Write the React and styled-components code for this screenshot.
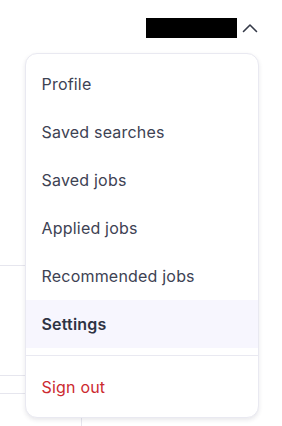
import React from "react";
import styled, { createGlobalStyle } from "styled-components";

const GlobalStyle = createGlobalStyle`
  body {
    margin: 0;
    background: #ffffff;
    font-family: Inter, "Noto Sans", sans-serif;
  }
`;

const menuItems = [
  { label: "Profile" },
  { label: "Saved searches" },
  { label: "Saved jobs" },
  { label: "Applied jobs" },
  { label: "Recommended jobs" },
  { label: "Settings", active: true },
];

const App = () => {
  return (
    <>
      <GlobalStyle />
      <Page>
        <Header>
          <AccountButton type="button">
            <Redacted />
            <Chevron viewBox="0 0 16 10" aria-hidden="true">
              <path d="M1.5 8.5L8 2l6.5 6.5" />
            </Chevron>
          </AccountButton>
        </Header>

        <Content>
          <Section $height={210} />
          <Section $height={110} />
          <Section $height={18} />
          <Columns>
            <Column />
            <Column />
          </Columns>
        </Content>

        <Menu>
          {menuItems.map((item) => (
            <MenuItem key={item.label} $active={item.active}>
              {item.label}
            </MenuItem>
          ))}
          <Divider />
          <MenuItem $danger>Sign out</MenuItem>
        </Menu>
      </Page>
    </>
  );
};

const Page = styled.div`
  position: relative;
  height: 426px;
  overflow: hidden;
`;

const Header = styled.header`
  display: flex;
  justify-content: flex-end;
  padding: 18px 24px 0 0;
  height: 38px;
  box-sizing: border-box;
`;

const AccountButton = styled.button`
  display: flex;
  align-items: center;
  gap: 5px;
  padding: 0;
  border: none;
  background: none;
  cursor: pointer;
`;

const Redacted = styled.span`
  display: block;
  width: 91px;
  height: 20px;
  background: #000000;
`;

const Chevron = styled.svg`
  width: 16px;
  height: 10px;
  fill: none;
  stroke: #353a48;
  stroke-width: 1.6;
  stroke-linecap: round;
  stroke-linejoin: round;
`;

const Content = styled.main`
  display: flex;
  flex-direction: column;
  width: 200px;
  padding-top: 18px;
`;

const Section = styled.div`
  height: ${(p) => p.$height}px;
  border-bottom: 1.5px solid #e6e6ee;
  box-sizing: border-box;
`;

const Columns = styled.div`
  display: grid;
  grid-template-columns: 82px 1fr;
  height: 40px;
`;

const Column = styled.div`
  &:first-child {
    border-right: 1.5px solid #e6e6ee;
  }
`;

const Menu = styled.nav`
  position: absolute;
  top: 53px;
  left: 24.5px;
  width: 234px;
  box-sizing: border-box;
  padding: 6px 0;
  background: #ffffff;
  border: 1.5px solid #e9e9f1;
  border-radius: 12px;
  box-shadow: 0 2px 4px rgba(30, 30, 60, 0.1);
  display: flex;
  flex-direction: column;
`;

const MenuItem = styled.a`
  display: flex;
  align-items: center;
  height: 48px;
  padding: 0 16px;
  font-size: 16px;
  font-weight: ${(p) => (p.$active ? 600 : 400)};
  color: ${(p) => (p.$danger ? "#cc2a30" : p.$active ? "#2e3343" : "#3d4253")};
  background: ${(p) => (p.$active ? "#f7f6fe" : "transparent")};
  cursor: pointer;
  letter-spacing: 0.2px;
`;

const Divider = styled.hr`
  margin: 7px 0 7px;
  border: none;
  border-top: 1.5px solid #e9e9f1;
`;

export default App;
